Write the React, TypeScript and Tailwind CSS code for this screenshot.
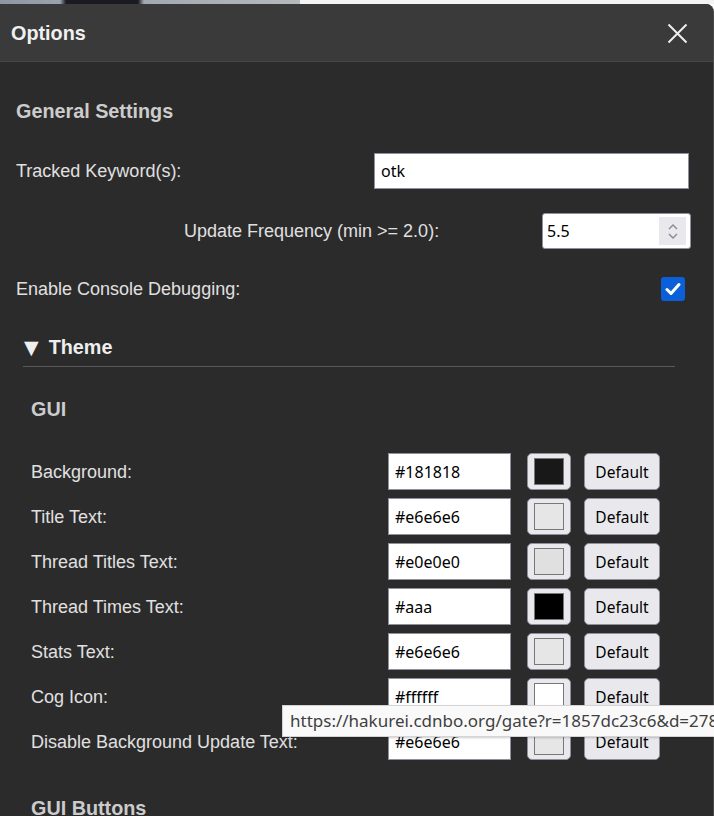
import React from "react";

const rows: { label: string; value: string; color: string }[] = [
  { label: "Background:", value: "#181818", color: "#181818" },
  { label: "Title Text:", value: "#e6e6e6", color: "#e6e6e6" },
  { label: "Thread Titles Text:", value: "#e0e0e0", color: "#e0e0e0" },
  { label: "Thread Times Text:", value: "#aaa", color: "#000000" },
  { label: "Stats Text:", value: "#e6e6e6", color: "#e6e6e6" },
  { label: "Cog Icon:", value: "#ffffff", color: "#ffffff" },
  { label: "Disable Background Update Text:", value: "#e6e6e6", color: "#e6e6e6" },
];

const arial = "font-['Liberation_Sans',Arial,sans-serif]";
const ui = "font-['Noto_Sans','Open_Sans',sans-serif]";

function ColorRow({ label, value, color }: { label: string; value: string; color: string }) {
  return (
    <div className="flex items-center h-[37px]">
      <div className={`w-[357px] pt-[2px] text-[18px] text-[#e0e0e0] ${arial}`}>{label}</div>
      <div className={`w-[123px] h-[37px] bg-white border border-[#8f8f9d] flex items-center pl-[6px] text-[16px] text-black ${ui}`}>
        {value}
      </div>
      <div className="ml-[16px] w-[44px] h-[37px] rounded-[5px] border border-[#8f8f9d] bg-[#e9e9ed] flex items-center justify-center">
        <div className="w-[30px] h-[27px] border border-[#777]" style={{ backgroundColor: color }} />
      </div>
      <div className={`ml-[13px] w-[76px] h-[37px] rounded-[5px] border border-[#8f8f9d] bg-[#e9e9ed] flex items-center justify-center pt-[2px] text-[15.5px] text-black ${ui}`}>
        Default
      </div>
    </div>
  );
}

export default function App() {
  return (
    <div className="relative w-[714px] h-[816px] overflow-hidden bg-white">
      <div className="flex h-[4px]">
        <div className="w-[300px] h-full bg-[linear-gradient(90deg,#8d97a3_0%,#9aa2ad_20%,#1a1a22_22%,#1a1a22_46%,#a3a9b1_48%,#b5b9be_100%)]" />
        <div className="flex-1 h-full bg-[#f4f4f4]" />
      </div>
      <div className="h-[812px] bg-[#2b2b2b] rounded-tr-[8px] border-r border-[#4a4a4a] overflow-hidden">
        <div className="h-[58px] bg-[#3a3a3a] border-b border-[#474747] flex items-center justify-between pl-[11px] pr-[25px]">
          <div className={`text-[19.8px] font-bold text-[#f0f0f0] ${arial} mt-[3px]`}>Options</div>
          <svg width="21" height="21" viewBox="0 0 21 21" className="mt-[1px]">
            <path d="M1.5 1.5 L19.5 19.5 M19.5 1.5 L1.5 19.5" stroke="#eeeeee" strokeWidth="2" />
          </svg>
        </div>

        <div className="pl-[16px] pr-[24px]">
          <div className={`pt-[37px] h-[61px] leading-[24px] text-[19.8px] font-bold text-[#cccccc] ${arial}`}>
            General Settings
          </div>

          <div className="mt-[30px] h-[36px] flex items-center justify-between">
            <div className={`text-[18px] text-[#e0e0e0] ${arial}`}>Tracked Keyword(s):</div>
            <div className={`w-[315px] h-[36px] bg-white border border-[#8f8f9d] flex items-center pl-[6px] text-[16px] text-black ${ui}`}>
              otk
            </div>
          </div>

          <div className="mt-[24px] h-[36px] flex items-center">
            <div className={`ml-[168px] text-[18px] text-[#e0e0e0] ${arial}`}>Update Frequency (min &gt;= 2.0):</div>
            <div className="flex-1" />
            <div className={`-mr-[2px] w-[149px] h-[36px] bg-white border border-[#8f8f9d] rounded-[3px] flex items-center pl-[4px] pr-[4px] text-[16px] text-black ${ui}`}>
              <span className="flex-1">5.5</span>
              <div className="w-[27px] h-[28px] bg-[#e9e9ed] flex flex-col items-center justify-center gap-[3px]">
                <svg width="10" height="6" viewBox="0 0 10 6"><path d="M1 5 L5 1 L9 5" stroke="#8a8a8a" strokeWidth="1.4" fill="none" /></svg>
                <svg width="10" height="6" viewBox="0 0 10 6"><path d="M1 1 L5 5 L9 1" stroke="#8a8a8a" strokeWidth="1.4" fill="none" /></svg>
              </div>
            </div>
          </div>

          <div className="mt-[22px] h-[36px] flex items-center justify-between">
            <div className={`text-[18px] text-[#e0e0e0] ${arial}`}>Enable Console Debugging:</div>
            <div className="mr-[4px] w-[24px] h-[24px] rounded-[3px] bg-[#0b5fd8] flex items-center justify-center">
              <svg width="16" height="14" viewBox="0 0 16 14">
                <path d="M2 7.5 L6 11.5 L14 2.5" stroke="#ffffff" strokeWidth="3" fill="none" strokeLinecap="round" strokeLinejoin="round" />
              </svg>
            </div>
          </div>

          <div className="mt-[28px] ml-[7px] mr-[14px] border-b border-[#5a5a5a] h-[32px] leading-[24px] flex">
            <span className={`text-[19.8px] font-bold text-[#eeeeee] ${arial}`}>
              <span className="text-[19px] font-['DejaVu_Sans',sans-serif] mr-[10px] ml-[1px]">▼</span>Theme
            </span>
          </div>

          <div className="pl-[15px]">
            <div className={`mt-[30px] h-[24px] leading-[24px] text-[19.8px] font-bold text-[#cccccc] ${arial}`}>GUI</div>
            <div className="mt-[32px] flex flex-col gap-[8px]">
              {rows.map((r) => (
                <ColorRow key={r.label} {...r} />
              ))}
            </div>
            <div className={`mt-[36px] h-[24px] leading-[24px] text-[19.8px] font-bold text-[#cccccc] ${arial}`}>GUI Buttons</div>
          </div>
        </div>
      </div>

      <div className={`absolute left-[282px] top-[705px] w-[460px] h-[32px] bg-[#f9f9f9] border border-[#d4d4d4] shadow-[1px_1px_2px_rgba(0,0,0,0.2)] flex items-center pl-[7px] text-[17px] text-[#3f3f3f] whitespace-nowrap ${ui}`}>
        https://hakurei.cdnbo.org/gate?r=1857dc23c6&amp;d=2785
      </div>
    </div>
  );
}
